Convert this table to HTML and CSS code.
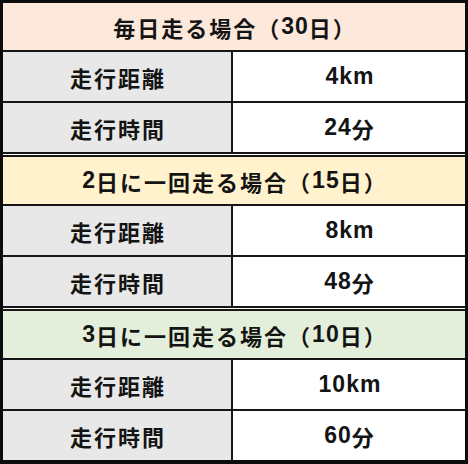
FILE: index.html
```html
<!DOCTYPE html>
<html lang="ja">
<head>
<meta charset="utf-8">
<link rel="stylesheet" href="styles.css">
</head>
<body>
<div class="table">
  <section class="section">
    <div class="head head-peach">毎日走る場合（<span class="num">30</span>日）</div>
    <div class="row"><div class="label">走行距離</div><div class="value"><span class="num">4km</span></div></div>
    <div class="row"><div class="label">走行時間</div><div class="value"><span class="num">24</span>分</div></div>
  </section>
  <section class="section">
    <div class="head head-yellow"><span class="num">2</span>日に一回走る場合（<span class="num">15</span>日）</div>
    <div class="row"><div class="label">走行距離</div><div class="value"><span class="num">8km</span></div></div>
    <div class="row"><div class="label">走行時間</div><div class="value"><span class="num">48</span>分</div></div>
  </section>
  <section class="section">
    <div class="head head-green"><span class="num">3</span>日に一回走る場合（<span class="num">10</span>日）</div>
    <div class="row"><div class="label">走行距離</div><div class="value"><span class="num">10km</span></div></div>
    <div class="row"><div class="label">走行時間</div><div class="value"><span class="num">60</span>分</div></div>
  </section>
</div>
</body>
</html>
```
FILE: styles.css
```css
html, body {
  margin: 0;
  padding: 0;
  background: #ffffff;
}

.table {
  box-sizing: border-box;
  width: 468px;
  height: 464px;
  border: 3px solid #0c0c0c;
  border-bottom-width: 4px;
  display: flex;
  flex-direction: column;
  font-family: "Liberation Sans", "Noto Sans CJK JP", sans-serif;
  font-weight: bold;
  font-size: 22px;
  letter-spacing: 2px;
  color: #141414;
}

.num {
  font-size: 23px;
  letter-spacing: 1px;
}

.section + .section {
  border-top: 5px double #161616;
}

.head {
  height: 47px;
  display: flex;
  align-items: center;
  justify-content: center;
  padding-left: 2px;
}

.head-peach { background: #fde8dc; }
.head-yellow { background: #fff2cd; }
.head-green { background: #e3efda; }

.row {
  display: grid;
  grid-template-columns: 230px 1fr;
  height: 49px;
  border-top: 2px solid #161616;
}

.label,
.value {
  display: flex;
  align-items: center;
  justify-content: center;
  padding-left: 2px;
}

.label {
  background: #e8e8e8;
  border-right: 2px solid #161616;
}

.value {
  background: #ffffff;
}
```
